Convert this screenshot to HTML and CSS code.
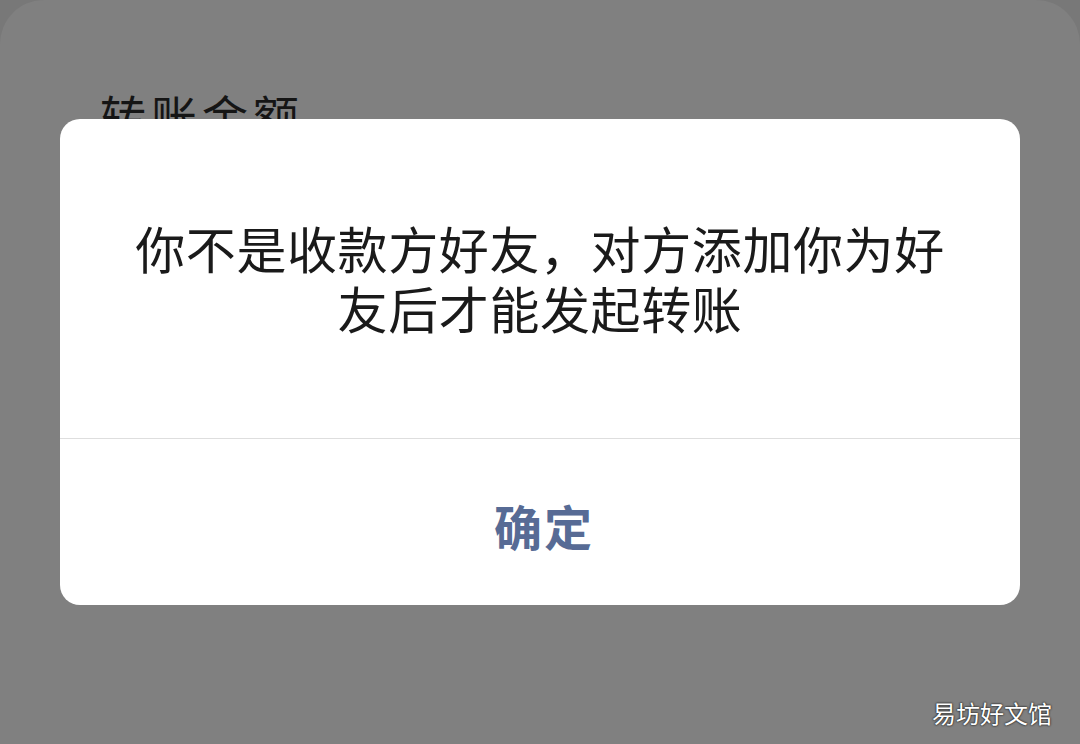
FILE: index.html
```html
<!DOCTYPE html>
<html lang="zh-CN">
<head>
<meta charset="utf-8">
<link rel="stylesheet" href="styles.css">
</head>
<body>
<div class="panel">
  <div class="title">转账金额</div>
</div>
<div class="dialog">
  <div class="message">你不是收款方好友，对方添加你为好友后才能发起转账</div>
  <div class="actions"><span class="btn">确定</span></div>
</div>
<div class="watermark">易坊好文馆</div>
</body>
</html>
```
FILE: styles.css
```css
html, body {
  margin: 0;
  padding: 0;
}
body {
  width: 1080px;
  height: 744px;
  background: #787878;
  overflow: hidden;
  position: relative;
  font-family: "Noto Sans CJK SC", "Noto Sans", sans-serif;
}
.panel {
  height: 744px;
  background: #808080;
  border-radius: 44px 44px 0 0;
  padding: 86px 0 0 100px;
  box-sizing: border-box;
}
.title {
  font-size: 46px;
  line-height: 56px;
  color: #151515;
  letter-spacing: 5px;
}
.dialog {
  position: absolute;
  left: 60px;
  top: 119px;
  width: 960px;
  background: #fff;
  border-radius: 20px;
  display: flex;
  flex-direction: column;
}
.message {
  height: 319px;
  box-sizing: border-box;
  padding: 98px 60px 0;
  text-align: center;
  font-size: 50px;
  line-height: 60px;
  color: #1a1a1a;
  letter-spacing: 0.6px;
}
.actions {
  height: 166px;
  border-top: 1px solid #dedede;
  display: flex;
  align-items: center;
  justify-content: center;
}
.btn {
  font-size: 48px;
  font-weight: 700;
  color: #576b95;
  letter-spacing: 2px;
  padding: 6px 0 0 8px;
}
.watermark {
  position: absolute;
  right: 28px;
  bottom: 16px;
  font-size: 24px;
  line-height: 30px;
  color: #fff;
  text-shadow: 0 0 2px #222, 0 0 2px #222;
}
```
